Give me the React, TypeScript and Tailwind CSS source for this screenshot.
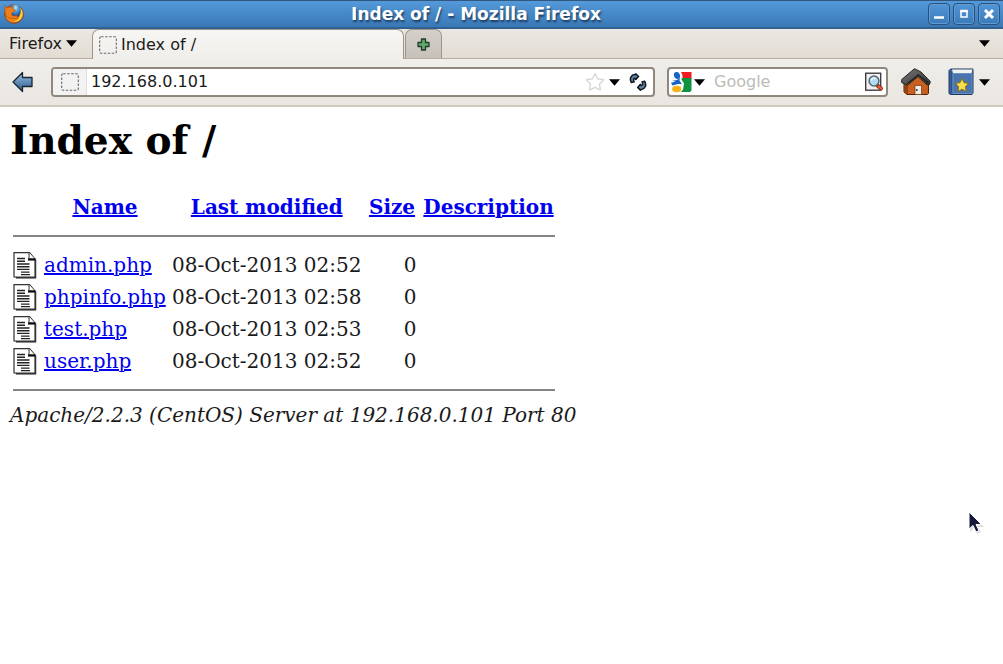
import type { ReactNode } from "react";

const files = [
  { name: "admin.php", modified: "08-Oct-2013 02:52", size: "0" },
  { name: "phpinfo.php", modified: "08-Oct-2013 02:58", size: "0" },
  { name: "test.php", modified: "08-Oct-2013 02:53", size: "0" },
  { name: "user.php", modified: "08-Oct-2013 02:52", size: "0" },
];

function FirefoxLogo() {
  return (
    <svg className="h-5 w-5" viewBox="0 0 20 20" aria-hidden="true">
      <defs>
        <radialGradient id="globe" cx="0.5" cy="0.25" r="0.7">
          <stop offset="0" stopColor="#b4e6f7" />
          <stop offset="0.5" stopColor="#4593d2" />
          <stop offset="1" stopColor="#173f80" />
        </radialGradient>
        <linearGradient id="fox" x1="0" y1="0" x2="1" y2="1">
          <stop offset="0" stopColor="#e0610f" />
          <stop offset="0.6" stopColor="#f08a1c" />
          <stop offset="1" stopColor="#c04407" />
        </linearGradient>
      </defs>
      <circle cx="10" cy="10" r="9.3" fill="url(#fox)" stroke="#8d3208" strokeWidth=".8" />
      <path d="M16 3.500c3 3 3.600 7.500 1.500 10.800-2 3-5.500 4.200-8.500 3.200 2.500-.3 5-1.500 6.200-4 1.500-3 1.500-6.500.8-10Z" fill="#ffd23a" />
      <path d="M6 2.500C9.500-.3 14-.1 15.800 3c1.400 3 1.200 7.300-1.300 9.500-2.500 2-6 1-7-1.500Z" fill="url(#globe)" />
      <path d="M1.200 1.500 3.500 4c1.200-.8 2.500-.9 3.700-.6L9.200 1.500 9 5l2.500 1.600-2.200 1.700c-1.300.2-2.100 1.300-1.500 2.500.9 1.500 2.600 1.400 4 .8 1-.4 1.900 0 1.700.7-.8 1.700-3 2.500-5.300 2.100-3.500.2-6.200-2-7-5C.6 7 1 4.500 1.200 1.500Z" fill="#ee7d1c" stroke="#a54309" strokeWidth=".5" />
    </svg>
  );
}

function Caret({ className = "" }: { className?: string }) {
  return (
    <svg className={`h-[7px] w-[11px] shrink-0 ${className}`} viewBox="0 0 11 7" aria-hidden="true">
      <path d="M0 .3h11L5.500 6.700Z" fill="#000" />
    </svg>
  );
}

function BlankIcon() {
  return (
    <svg className="h-[18px] w-[18px] shrink-0" viewBox="0 0 18 18" aria-hidden="true">
      <rect x=".7" y=".7" width="16.600" height="16.600" rx="1.500" fill="none" stroke="#6a6a6a" strokeWidth="1.100" strokeDasharray="2.500 1.500" />
    </svg>
  );
}

function BackIcon() {
  return (
    <svg className="h-[22px] w-[22px]" viewBox="0 0 22 22" aria-hidden="true">
      <defs>
        <linearGradient id="back" x1="0" y1="0" x2="0" y2="1">
          <stop offset="0" stopColor="#a5c3de" />
          <stop offset="0.5" stopColor="#5f8db8" />
          <stop offset="1" stopColor="#2f5c8a" />
        </linearGradient>
      </defs>
      <path d="M1 11 10.500 1.500V6.500h9.500v9h-9.500v5Z" fill="url(#back)" stroke="#182634" strokeWidth="1.300" strokeLinejoin="round" />
    </svg>
  );
}

function PlusIcon() {
  return (
    <svg className="h-[13px] w-[13px]" viewBox="0 0 13 13" aria-hidden="true">
      <path d="M4.500 1h4v3.500H12v4H8.500V12h-4V8.500H1v-4h3.500Z" fill="#5cab68" stroke="#26382a" strokeWidth="1.300" strokeLinejoin="round" />
    </svg>
  );
}

function StarIcon() {
  return (
    <svg className="h-5 w-5" viewBox="0 0 20 20" aria-hidden="true">
      <path d="m10 1.500 2.600 5.300 6.200.9-4.300 4.200.9 6.200L10 15.300l-5.400 2.800.9-6.200L1.200 7.700l6.200-.9Z" fill="#fff" stroke="#d8d8d8" strokeWidth="1.400" strokeLinejoin="round" />
    </svg>
  );
}

function ReloadIcon() {
  return (
    <svg className="h-[18px] w-[18px]" viewBox="0 0 18 18" aria-hidden="true">
      <g fill="#5f83a3" stroke="#101820" strokeWidth="1.500" strokeLinejoin="round">
        <path d="M2.200 9.500C.2 5.500 2.200 1.700 5.800 1.500L6.800.9 9.500 3.500 6.800 6.500 6 5.300C4.500 5.300 4.200 7.200 5.200 8.800Z" />
        <path d="M15.600 8.200c2.300 3.800.7 7.800-3.200 8.200l-1 .7-2.700-2.700 2.500-3 1 1.200c1.600-.2 1.900-2.200.8-3.700Z" />
      </g>
    </svg>
  );
}

function GoogleIcon() {
  return (
    <svg className="h-[22px] w-[21px]" viewBox="0 0 21 22" aria-hidden="true">
      <path d="M10 1h10.500v7H12Z" fill="#ee1c24" />
      <path d="M10 7h10.500v12.500L19 21h-9l1-5-3-4Z" fill="#109340" />
      <path d="M0 0h9l2.500 4-1 4.500 2.500 4-1 6-3 3.500H0Z" fill="#fff" />
      <ellipse cx="6" cy="4.500" rx="3" ry="3.600" transform="rotate(-15 6 4.500)" fill="#1763c6" />
      <path d="M0 8c2.500 2 5.500 2 9-1L8.500 9.800l2.500 3.400c-2.500-.6-6-.2-9.500 1.300L0 11.700l4-.9Z" fill="#1763c6" />
      <ellipse cx="5.700" cy="18" rx="4.600" ry="3.200" fill="#f6b21b" />
    </svg>
  );
}

function SearchIcon() {
  return (
    <svg className="h-5 w-5" viewBox="0 0 20 20" aria-hidden="true">
      <rect x="1.700" y="1.200" width="15" height="17" fill="#f0f0f0" stroke="#333" strokeWidth="1.300" />
      <path d="m13.500 13.500 3.500 3" stroke="#862a12" strokeWidth="4" strokeLinecap="round" />
      <path d="m14.500 14.300 2.500 2.200" stroke="#ef5b32" strokeWidth="2.200" strokeLinecap="round" />
      <circle cx="10" cy="9" r="4.900" fill="#aedcf5" stroke="#5a6673" strokeWidth="1.500" />
      <path d="M7 8.500c.5-2 2.500-2.700 4.500-1.800" fill="none" stroke="#e9f8ff" strokeWidth="1.500" />
    </svg>
  );
}

function HomeIcon() {
  return (
    <svg className="h-7 w-[30px]" viewBox="0 0 30 28" aria-hidden="true">
      <defs>
        <linearGradient id="roof" x1="0" y1="0" x2="1" y2="1">
          <stop offset="0" stopColor="#777" />
          <stop offset="1" stopColor="#333" />
        </linearGradient>
      </defs>
      <path d="M3 13.500 17 6l10.500 9v10.500l-1.500 1H6L3 24Z" fill="#b9531a" stroke="#542405" />
      <path d="M7 16.500 17 8.500l9.500 8V26H7Z" fill="#c75f20" />
      <path d="M3.500 15.500 7 17v9l-3.500-2.500Z" fill="#994011" />
      <path d="M.7 11.500 13.500.7 20 4l9.300 9.500-.8 3-2.500.3L17 8.500 6.500 17.200.7 14.500Z" fill="url(#roof)" stroke="#222" strokeLinejoin="round" />
      <path d="m6.500 15.500 10.800-8.700 10 8.200" fill="none" stroke="#1f1f1f" strokeWidth="1.300" />
      <path d="M14 17.500h6.500v9H14Z" fill="#eee" stroke="#773008" strokeWidth=".7" />
      <circle cx="15.800" cy="22" r="1" fill="#333" />
    </svg>
  );
}

function BookmarkIcon() {
  return (
    <svg className="h-7 w-[27px]" viewBox="0 0 27 28" aria-hidden="true">
      <path d="M2.500 1H25v24l-1 1.500H2.500L1 25.500v-23Z" fill="#3e69a3" stroke="#1c3760" />
      <path d="M4 1.500h20.500L23.500 5H5Z" fill="#f3f3ed" />
      <path d="M5 5.500h19v20H5Z" fill="#4a74ae" stroke="#7198c9" strokeWidth=".8" />
      <path d="M3.300 3v22" stroke="#284c7d" />
      <path d="m14 10.500 2 4.200 4.700.7-3.400 3.300.8 4.700-4.100-2.200-4.100 2.200.8-4.700-3.400-3.300 4.700-.7Z" fill="#f8e04c" stroke="#8b7414" strokeLinejoin="round" />
    </svg>
  );
}

function FileIcon() {
  return (
    <svg className="h-[27px] w-[24px]" viewBox="0 0 24 27" role="img" aria-label="[   ]">
      <path d="M21.500 7.500H23v18.800H3V25h18.500Z" fill="#333" stroke="#333" strokeWidth=".5" />
      <path d="M1 .7h15.500L22 7v18H1Z" fill="#fff" stroke="#333" strokeWidth="1.200" />
      <path d="M16 .7V7h6" fill="#fff" stroke="#333" />
      <path d="M15 7.500h7.500" stroke="#111" strokeWidth="2.200" />
      <path d="M4 6.500h8M4 9.300h8M4 12h12.500M4 14.700h12.500M4 17.400h12.500M8 20.100h8.500M8 22.600h9" stroke="#222" strokeWidth="1.400" />
    </svg>
  );
}

function WindowButton({ label, children }: { label: string; children: ReactNode }) {
  return (
    <button
      type="button"
      aria-label={label}
      className="flex h-[22px] w-[22px] items-center justify-center rounded-[4px] border border-[#28517d] bg-linear-to-b from-[#5296d8] to-[#3b7ab8] shadow-[inset_0_0_0_1px_#619bd2]"
    >
      <svg className="h-3 w-3" viewBox="0 0 12 12" fill="none" stroke="#fff" aria-hidden="true">
        {children}
      </svg>
    </button>
  );
}

function TitleBar() {
  return (
    <header className="flex h-[29px] items-center border-t border-b-2 border-t-[#31577f] border-b-[#316190] bg-linear-to-b from-[#5499da] to-[#3a78b5] pr-[3px] pl-1">
      <div className="flex w-[76px] items-center">
        <FirefoxLogo />
      </div>
      <div className="flex-1 truncate pr-[56px] text-center text-[17px] leading-6 font-bold text-white [text-shadow:1px_2px_2px_#1b3c60]">
        Index of / - Mozilla Firefox
      </div>
      <div className="flex gap-[3px]">
        <WindowButton label="Minimize">
          <path d="M1 9.500h10" strokeWidth="2.500" />
        </WindowButton>
        <WindowButton label="Maximize">
          <path d="M3 3v6h6V3" strokeWidth="1.500" />
          <path d="M2.200 3h7.600" strokeWidth="2.500" />
        </WindowButton>
        <WindowButton label="Close">
          <path d="m2 2 8 8M10 2l-8 8" strokeWidth="3" />
        </WindowButton>
      </div>
    </header>
  );
}

function TabBar() {
  return (
    <div className="flex h-[30px] items-end border-b border-[#b5ac9e] bg-linear-to-b from-[#ebe7e2] to-[#e2dcd3] pr-[13px]">
      <button type="button" className="flex h-full w-[92px] shrink-0 items-center pl-[9px] text-base">
        Firefox
        <Caret className="ml-1" />
      </button>
      <div className="-mb-px flex h-[30px] w-[312px] items-center gap-1 rounded-t-[7px] border border-b-0 border-[#9c958b] bg-linear-to-b from-[#f7f6f4] to-[#f0eeea] pl-[6px] text-base">
        <BlankIcon />
        Index of /
      </div>
      <button
        type="button"
        aria-label="Open a new tab"
        className="ml-px flex h-[29px] w-[37px] items-center justify-center rounded-t-[7px] border border-b-0 border-[#9c958b] bg-linear-to-b from-[#d5d0ca] to-[#c6c1ba]"
      >
        <PlusIcon />
      </button>
      <button type="button" aria-label="List all tabs" className="ml-auto flex h-full items-center">
        <Caret />
      </button>
    </div>
  );
}

function NavBar() {
  return (
    <div className="flex h-[48px] items-center border-b-2 border-[#d0c9be] bg-linear-to-b from-[#f0eeea] to-[#eae6e1] pr-[13px] pl-3">
      <button type="button" aria-label="Go back" className="w-[39px]">
        <BackIcon />
      </button>
      <div className="flex h-[30px] flex-1 items-center overflow-hidden rounded-[4px] border-2 border-[#91887d] bg-white pr-[6px]">
        <div className="flex h-full w-[34px] items-center justify-center border-r border-[#dedede] bg-[#f2f2f2]">
          <BlankIcon />
        </div>
        <input
          aria-label="Address"
          defaultValue="192.168.0.101"
          className="min-w-0 flex-1 bg-transparent px-1 text-base outline-none"
        />
        <button type="button" aria-label="Bookmark this page">
          <StarIcon />
        </button>
        <button type="button" aria-label="Show history" className="ml-1">
          <Caret />
        </button>
        <button type="button" aria-label="Reload" className="ml-[9px]">
          <ReloadIcon />
        </button>
      </div>
      <div className="ml-3 flex h-[30px] w-[221px] items-center rounded-[4px] border-2 border-[#91887d] bg-white pr-[2px] pl-[2px]">
        <button type="button" aria-label="Choose search engine" className="flex items-center gap-[2px]">
          <GoogleIcon />
          <Caret />
        </button>
        <input
          aria-label="Search"
          placeholder="Google"
          className="min-w-0 flex-1 bg-transparent pl-[9px] text-base outline-none placeholder:text-[#bcbcb6]"
        />
        <button type="button" aria-label="Run search">
          <SearchIcon />
        </button>
      </div>
      <button type="button" aria-label="Home" className="ml-[13px]">
        <HomeIcon />
      </button>
      <button type="button" aria-label="Bookmarks" className="ml-[17px] flex items-center gap-1">
        <BookmarkIcon />
        <Caret />
      </button>
    </div>
  );
}

function Rule() {
  return (
    <tr className="h-[26px]">
      <td colSpan={5} className="px-[3px]">
        <hr className="border-t-2 border-[#858585]" />
      </td>
    </tr>
  );
}

function Listing() {
  return (
    <table className="border-separate border-spacing-0 text-xl">
      <colgroup>
        <col className="w-[31px]" />
        <col className="w-[128px]" />
        <col className="w-[194px]" />
        <col className="w-[55px]" />
        <col className="w-[138px]" />
      </colgroup>
      <thead>
        <tr className="h-8">
          <th />
          {["Name", "Last modified", "Size", "Description"].map((title) => (
            <th key={title} className="px-[3px] whitespace-nowrap">
              <a href="#sort" className="text-[#0000ee] underline">
                {title}
              </a>
            </th>
          ))}
        </tr>
      </thead>
      <tbody>
        <Rule />
        {files.map((file) => (
          <tr key={file.name} className="h-8 whitespace-nowrap">
            <td className="pl-[3px]">
              <FileIcon />
            </td>
            <td className="px-[3px]">
              <a href="#file" className="text-[#0000ee] underline">
                {file.name}
              </a>
            </td>
            <td className="px-[3px] text-right">{file.modified}</td>
            <td className="px-[3px] text-right">{file.size}</td>
            <td />
          </tr>
        ))}
        <Rule />
      </tbody>
    </table>
  );
}

function Pointer() {
  return (
    <svg className="pointer-events-none absolute top-[511px] left-[967px] h-6 w-[18px]" viewBox="0 0 18 24" aria-hidden="true">
      <path d="M3 3v18l4-4 3 6 4-2-3-5h6Z" fill="#bbb" opacity=".5" />
      <path d="M2 1v17l4-3.500 3 6.500 3-1.500-3-6h5.500Z" fill="#17193a" stroke="#fff" />
    </svg>
  );
}

export default function App() {
  return (
    <div className="relative min-h-screen bg-white font-['DejaVu_Sans',sans-serif] text-[#1a1a1a]">
      <TitleBar />
      <TabBar />
      <NavBar />
      <main className="px-[10px] pt-[9px] font-['DejaVu_Serif',serif]">
        <h1 className="mb-[27px] text-[39px] leading-[48px] font-bold text-black">Index of /</h1>
        <Listing />
        <address className="text-xl leading-6">Apache/2.2.3 (CentOS) Server at 192.168.0.101 Port 80</address>
      </main>
      <Pointer />
    </div>
  );
}
